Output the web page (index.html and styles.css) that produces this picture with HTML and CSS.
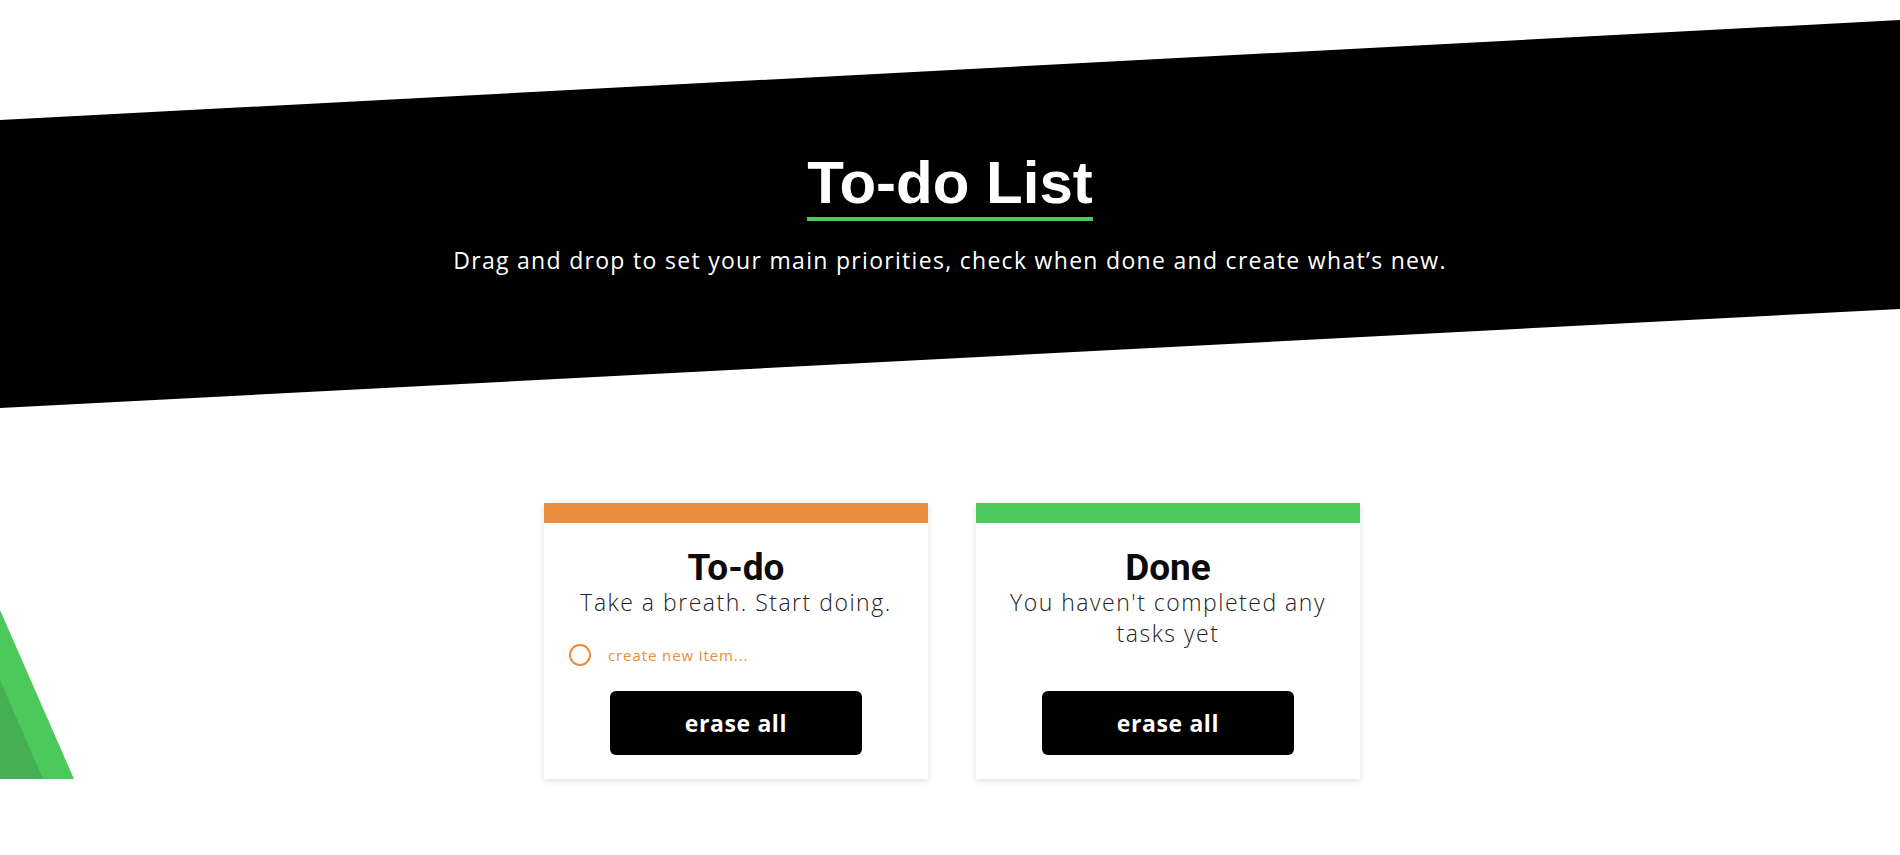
FILE: index.html
```html
<!DOCTYPE html>
<html lang="en">
<head>
<meta charset="utf-8">
<title>To-do List</title>
<link rel="stylesheet" href="styles.css">
</head>
<body>
<header class="hero">
  <h1 class="hero-title">To-do List</h1>
  <p class="hero-sub">Drag and drop to set your main priorities, check when done and create what’s new.</p>
</header>
<main class="board">
  <svg class="deco" width="74" height="169" viewBox="0 0 74 169" aria-hidden="true">
    <polygon points="0,0 74,169 0,169" fill="#4bc95a"/>
    <polygon points="0,70 43,169 0,169" fill="#46ae53"/>
  </svg>
  <section class="card card-todo">
    <h2 class="card-title">To-do</h2>
    <p class="card-sub">Take a breath. Start doing.</p>
    <div class="new-item">
      <span class="circle"></span>
      <span class="new-text">create new item...</span>
    </div>
    <button class="erase">erase all</button>
  </section>
  <section class="card card-done">
    <h2 class="card-title">Done</h2>
    <p class="card-sub">You haven't completed any tasks yet</p>
    <button class="erase">erase all</button>
  </section>
</main>
</body>
</html>
```
FILE: styles.css
```css
html, body {
  margin: 0;
  padding: 0;
  background: #fff;
}
body {
  position: relative;
  font-family: "Open Sans", "Liberation Sans", sans-serif;
  color: #111;
  min-height: 855px;
  overflow: hidden;
}
.hero {
  height: 408px;
  background: #000;
  clip-path: polygon(0 120px, 100% 20px, 100% 309px, 0 408px);
  text-align: center;
  padding-top: 153px;
  box-sizing: border-box;
}
.hero-title {
  display: inline-block;
  margin: 0;
  font-family: "Liberation Sans", Arial, sans-serif;
  font-weight: 700;
  font-size: 60px;
  line-height: 59px;
  color: #fff;
  padding-bottom: 5px;
  border-bottom: 4px solid #4bc95a;
}
.hero-sub {
  margin: 24px 0 0;
  font-size: 23px;
  line-height: 30px;
  color: #fff;
  letter-spacing: 1.3px;
}
.board {
  display: flex;
  justify-content: center;
  align-items: stretch;
  gap: 48px;
  margin-top: 95px;
  padding-left: 4px;
}
.deco {
  position: absolute;
  left: 0;
  top: 610px;
  display: block;
}
.card {
  width: 384px;
  box-sizing: border-box;
  background: #fff;
  border-top: 20px solid #e98d3c;
  box-shadow: 0 2px 6px rgba(0, 0, 0, 0.13);
  padding: 26px 22px 24px;
  display: flex;
  flex-direction: column;
  align-items: center;
  text-align: center;
}
.card-done {
  border-top-color: #4bc95a;
}
.card-title {
  margin: 0;
  font-family: Roboto, "Liberation Sans", sans-serif;
  font-weight: 700;
  font-size: 37px;
  line-height: 38px;
  color: #0a0a0a;
}
.card-sub {
  margin: 0;
  font-size: 23px;
  line-height: 31px;
  font-weight: 300;
  color: #222;
  letter-spacing: 1.5px;
}
.new-item {
  align-self: stretch;
  display: flex;
  align-items: center;
  gap: 17px;
  margin: 26px 0 25px 3px;
  height: 22px;
}
.circle {
  width: 22px;
  height: 22px;
  box-sizing: border-box;
  border: 2px solid #e98d3c;
  border-radius: 50%;
}
.new-text {
  font-size: 15px;
  color: #e98d3c;
  letter-spacing: 0.9px;
}
.erase {
  margin-top: auto;
  width: 252px;
  height: 64px;
  border: none;
  border-radius: 6px;
  background: #000;
  color: #fff;
  font-family: "Open Sans", "Liberation Sans", sans-serif;
  font-weight: 700;
  font-size: 23px;
  letter-spacing: 0.6px;
  cursor: pointer;
}
```
